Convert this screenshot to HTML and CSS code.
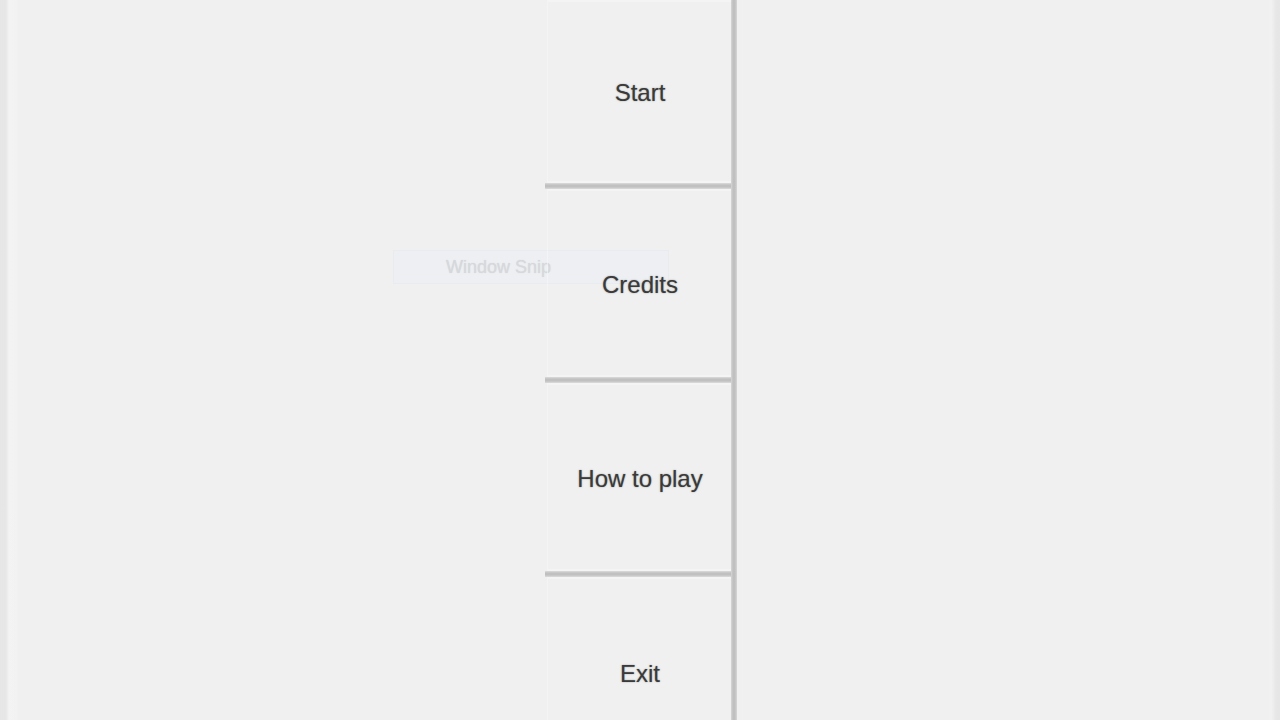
FILE: index.html
```html
<!DOCTYPE html>
<html>
<head>
<meta charset="utf-8">
<link rel="stylesheet" href="styles.css">
</head>
<body>
<div class="screen">
  <div class="edge edge-left"></div>
  <div class="spacer"></div>
  <div class="menu">
    <div class="btn first"><span>Start</span></div>
    <div class="sep"></div>
    <div class="btn"><span>Credits</span></div>
    <div class="sep"></div>
    <div class="btn"><span>How to play</span></div>
    <div class="sep"></div>
    <div class="btn last"><span>Exit</span></div>
  </div>
  <div class="vline"></div>
  <div class="rest"></div>
  <div class="edge edge-right"></div>
  <div class="snip">Window Snip</div>
</div>
</body>
</html>
```
FILE: styles.css
```css
html, body {
  margin: 0;
  padding: 0;
  background: #f0f0f0;
}
.screen {
  position: relative;
  width: 1280px;
  height: 720px;
  overflow: hidden;
  display: flex;
  background: #f0f0f0;
  font-family: "Liberation Sans", Arial, sans-serif;
}
.edge {
  width: 18px;
  flex: none;
}
.edge-left {
  background: linear-gradient(to right, #e6e6e6 0, #e7e7e7 6px, #f3f3f3 9px, #f2f2f2 16px, #f0f0f0 18px);
}
.edge-right {
  width: 12px;
  background: linear-gradient(to right, #f0f0f0 0, #f2f2f2 3px, #e7e7e7 8px, #e6e6e6 12px);
}
.spacer {
  width: 527px;
  flex: none;
}
.menu {
  position: relative;
  z-index: 1;
  width: 186px;
  flex: none;
  display: flex;
  flex-direction: column;
}
.btn {
  height: 188px;
  flex: none;
  display: flex;
  align-items: center;
  justify-content: center;
  margin-left: 2px;
  border-left: 1px solid rgba(246, 246, 246, 0.6);
  box-shadow: inset 0 2px 0 #f4f4f4, inset 0 -2px 0 #f4f4f4;
}
.btn span {
  font-size: 24px;
  color: #3a3a3a;
  padding-top: 4px;
  padding-left: 1px;
  text-shadow: 0 0 1.5px rgba(70, 70, 70, 0.6);
}
.btn.first {
  height: 183px;
}
.btn.first span {
  padding-top: 2px;
}
.btn.last {
  height: 190px;
}
.sep {
  height: 6px;
  flex: none;
  background: linear-gradient(to bottom, #dcdcdc, #c0c0c0 35%, #c0c0c0 65%, #dcdcdc);
}
.vline {
  width: 6px;
  flex: none;
  background: linear-gradient(to right, #d6d6d6, #c0c0c0 35%, #c0c0c0 65%, #d6d6d6);
}
.rest {
  flex: 1;
}
.snip {
  position: absolute;
  z-index: 0;
  left: 393px;
  top: 250px;
  width: 222px;
  height: 32px;
  padding-left: 52px;
  box-sizing: content-box;
  border: 1px solid #e8ebef;
  background: #edeff2;
  color: #d6d8db;
  font-size: 18px;
  line-height: 32px;
  text-shadow: 0 0 1px rgba(200, 202, 206, 0.6);
}
```
